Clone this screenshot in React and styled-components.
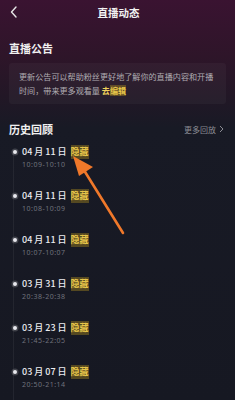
import React from 'react'
import styled, { createGlobalStyle } from 'styled-components'

const Global = createGlobalStyle`
  html, body { margin: 0; padding: 0; background: #161822; }
  body { font-family: "Noto Sans CJK SC", "Noto Sans", sans-serif; }
`

const Page = styled.div`
  position: relative;
  width: 235px;
  height: 400px;
  overflow: hidden;
  background: linear-gradient(180deg, #3a1331 0%, #2e1529 14%, #221726 24%, #181a25 32%, #161822 100%);
  color: #fff;
`

const NavBar = styled.div`
  height: 24px;
  display: flex;
  align-items: center;
  justify-content: center;
  position: relative;
`

const Back = styled.div`
  position: absolute;
  left: 9px;
  top: 5px;
  width: 10px;
  height: 14px;
  display: flex;
`

const NavTitle = styled.div`
  font-size: 10.5px;
  font-weight: 700;
  color: #f2f2f2;
  margin-left: 2px;
`

const Section = styled.div`
  padding: 0 9px;
`

const HeadRow = styled.div`
  display: flex;
  align-items: center;
  justify-content: space-between;
  height: 18px;
`

const Heading = styled.div`
  font-size: 11px;
  font-weight: 700;
  color: #f0f0f0;
`

const More = styled.div`
  font-size: 8px;
  color: #8a8b93;
  display: flex;
  align-items: center;
  gap: 3px;
  margin-right: 2px;
`

const Card = styled.div`
  margin-top: 6px;
  background: rgba(255, 255, 255, 0.035);
  border-radius: 3px;
  padding: 7px 10px 6px 10px;
  font-size: 8.1px;
  line-height: 14px;
  color: #b0acb2;
`

const Mark = styled.span`
  color: ${({ dark }) => (dark ? '#e7c54a' : '#f1d35b')};
  background: ${({ dark }) => (dark ? 'rgba(160, 130, 30, 0.45)' : 'transparent')};
  font-weight: 600;
`

const Timeline = styled.div`
  position: relative;
  margin-top: 7px;
  padding-left: 13px;
  &::before {
    content: '';
    position: absolute;
    left: 4px;
    top: 8px;
    bottom: 0;
    width: 1px;
    background: rgba(255, 255, 255, 0.06);
  }
`

const Item = styled.div`
  position: relative;
  height: 44px;
`

const Dot = styled.span`
  position: absolute;
  left: -9px;
  top: 5px;
  width: 4px;
  height: 4px;
  border-radius: 50%;
  background: #e8e8ee;
  box-shadow: 0 0 0 1.5px rgba(255, 255, 255, 0.18);
`

const DateText = styled.div`
  font-size: 9px;
  font-weight: 500;
  color: #ececf0;
  line-height: 14px;
  display: flex;
  gap: 4px;
  align-items: center;
`

const TimeText = styled.div`
  font-size: 7px;
  letter-spacing: 0.5px;
  color: #70727c;
  line-height: 11px;
  font-family: "Noto Sans", sans-serif;
`

const Overlay = styled.svg`
  position: absolute;
  left: 0;
  top: 0;
  pointer-events: none;
`

const items = [
  ['04 月 11 日', '10:09-10:10'],
  ['04 月 11 日', '10:08-10:09'],
  ['04 月 11 日', '10:07-10:07'],
  ['03 月 31 日', '20:38-20:38'],
  ['03 月 23 日', '21:45-22:05'],
  ['03 月 07 日', '20:50-21:14'],
]

export default function App() {
  return (
    <Page>
      <Global />
      <NavBar>
        <Back>
          <svg width="10" height="14" viewBox="0 0 10 14">
            <path d="M7 2 L2.5 7 L7 12" stroke="#e6e6e6" strokeWidth="1.4" fill="none" strokeLinecap="round" strokeLinejoin="round" />
          </svg>
        </Back>
        <NavTitle>直播动态</NavTitle>
      </NavBar>
      <Section style={{ marginTop: 15 }}>
        <HeadRow>
          <Heading>直播公告</Heading>
        </HeadRow>
        <Card>
          更新公告可以帮助粉丝更好地了解你的直播内容和开播时间，带来更多观看量 <Mark>去</Mark><Mark dark>编辑</Mark>
        </Card>
      </Section>
      <Section style={{ marginTop: 16 }}>
        <HeadRow>
          <Heading>历史回顾</Heading>
          <More>
            更多回放
            <svg width="5" height="8" viewBox="0 0 5 8">
              <path d="M1 1 L4 4 L1 7" stroke="#8a8b93" strokeWidth="1" fill="none" />
            </svg>
          </More>
        </HeadRow>
        <Timeline>
          {items.map(([d, t], i) => (
            <Item key={i}>
              <Dot />
              <DateText>
                {d} <Mark dark>隐藏</Mark>
              </DateText>
              <TimeText>{t}</TimeText>
            </Item>
          ))}
        </Timeline>
      </Section>
      <Overlay width="235" height="400" viewBox="0 0 235 400">
        <line x1="123" y1="233" x2="82" y2="167" stroke="#f0782a" strokeWidth="2.6" strokeLinecap="round" />
        <polygon points="73,156 93,167 79,176" fill="#f0782a" />
      </Overlay>
    </Page>
  )
}
